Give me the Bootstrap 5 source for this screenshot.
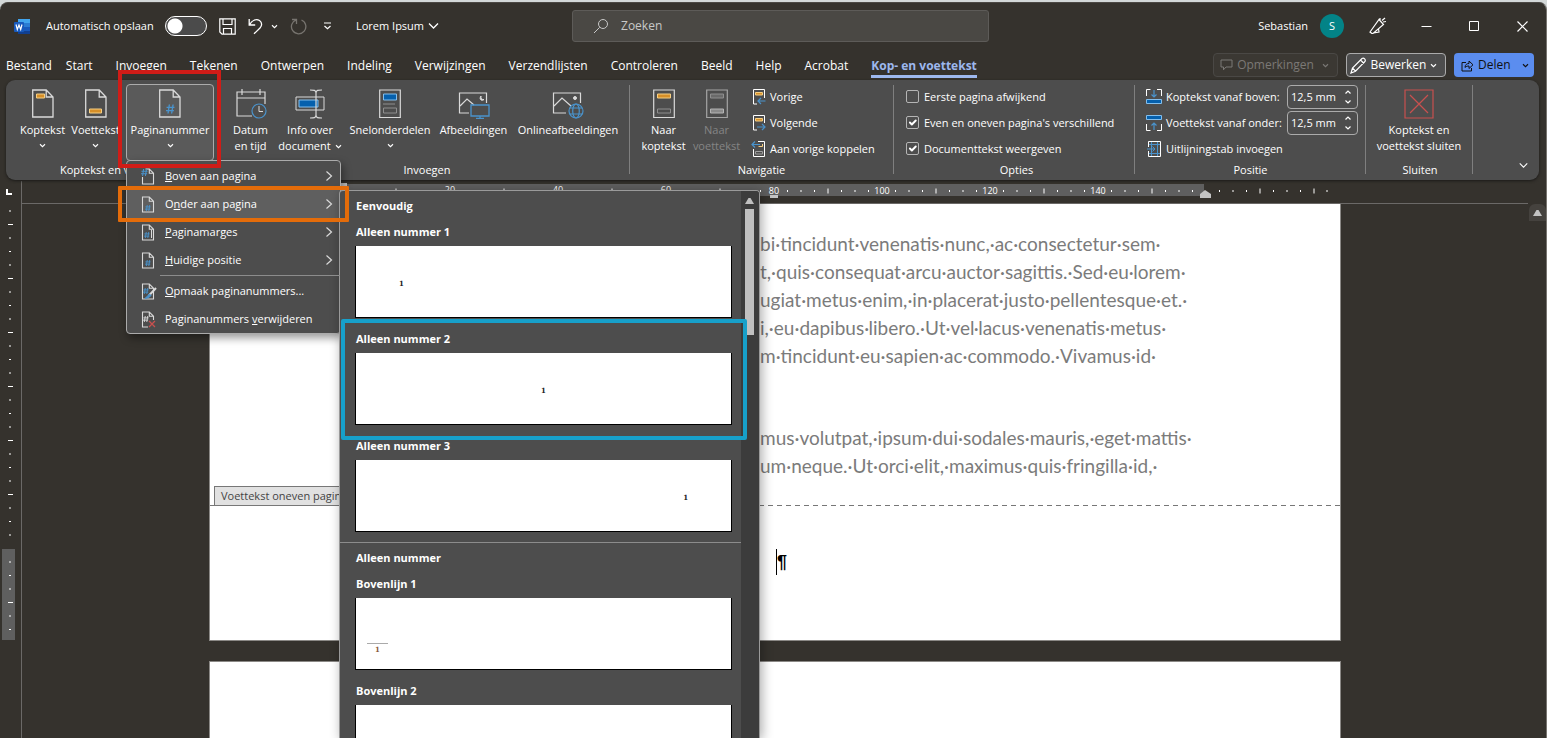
<!DOCTYPE html>
<html lang="nl">
<head>
<meta charset="utf-8">
<meta name="viewport" content="width=device-width, initial-scale=1">
<title>Lorem Ipsum - Word</title>
<link href="https://cdn.jsdelivr.net/npm/bootstrap@5.3.0/dist/css/bootstrap.min.css" rel="stylesheet">
<script src="https://cdn.jsdelivr.net/npm/bootstrap@5.3.0/dist/js/bootstrap.bundle.min.js" defer></script>
<style>
:root { --chrome:#35322d; --panel:#4d4d4d; --line:#ababab; --accent:#5b8def; --blue:#4a93cc; }
body { font-family:"Open Sans","Noto Sans",sans-serif; font-size:11px; line-height:16px; color:#fff; background:#d3d8d8; }
svg { display:block; flex:none; fill:none; stroke:currentColor; }
button { font-size:inherit; }
.plain { background:none; border:0; padding:0; color:inherit; line-height:inherit; }
.window { height:100vh; padding-top:2px; overflow:hidden; }
.window-inner { background:var(--chrome); border-radius:8px 8px 0 0; border-right:1px solid #77746f; border-top:1px solid #4b4844; }

.titlebar { display:grid; grid-template-columns:37% 27% 1fr; height:46px; }
.title-left { padding-left:14px; }
.autosave-label { width:119px; margin-left:15px; }
.autosave { width:42px; height:20px; margin:0; flex:none; background-color:#4b4b4b !important; border:1px solid #fff !important; border-radius:10px !important;
  background-image:radial-gradient(circle at 9px 9px,#fff 7px,transparent 8px) !important; background-size:auto; background-position:0 0; }
.gray-icon { color:#77746f; }
.search-box { background:#4a4844; border:1px solid #5d5b58; border-radius:3px; height:32px; padding-left:20px; gap:10px; color:#c8c8c8; }
.search-box input { background:none; border:0; outline:0; color:#d0d0d0; font-size:12px; }
.search-box input::placeholder { color:#c8c8c8; opacity:1; }
.avatar { width:24px; height:24px; background:#038387; margin-right:10px; }
.title-cell { width:48px; height:32px; display:flex; align-items:center; justify-content:center; }

.tabs-row { height:31px; font-size:12px; }
.tab-list { gap:23px; padding-left:6px; }
.tab-list a:first-child { margin-right:-9px; }
.tabs-row .nav-link { color:#fff; padding:8px 0 0; line-height:18px; height:29px; }
.tabs-row .nav-link.active { color:#9db8ee; font-weight:700; border-bottom:3px solid #9db8ee; }
.tab-tools { padding:4px 12px 0 0; gap:8px; }
.pill { height:24px; border-radius:4px; border:1px solid transparent; padding:0 8px 0 6px; font-size:12px; line-height:16px; }
.pill-off { color:#7b7976; border-color:#4a4845; background:#3b3833; width:125px; }
.pill-edit { color:#fff; border-color:var(--line); background:var(--panel); width:100px; padding-left:3px; }
.pill-share { color:#111; background:var(--accent); width:80px; padding-right:4px; }

.ribbon { background:var(--panel); margin:0 7px 0 6px; height:100px; border-radius:9px; z-index:10; box-shadow:0 1px 3px #1b1a18; }
.group { display:flex; flex-direction:column; flex:none; padding-top:4px; position:relative; }
.group.ruled::after { content:""; position:absolute; right:0; top:5px; bottom:6px; width:1px; background:#7f7f7f; }
.group-body { height:78px; display:flex; }
.group-label { text-align:center; height:16px; }
.big { height:77px; display:flex; flex-direction:column; align-items:center; padding:4px 0 0; color:#fff; background:none; border:1px solid transparent; border-radius:4px; line-height:16px; white-space:nowrap; }
.big > svg:first-child { margin-bottom:3px; color:#dadada; }
.big .chev { margin:5px 0 0; }
.big.pressed { background:#5a5a5a; border-color:var(--line); }
.big:disabled { color:#858585; }
.big.close-tools > svg { color:#c9504f; }
.w-s { width:53px; } .w-p { width:88px; } .w-i { width:66px; } .w-q { width:94px; } .w-a { width:73px; } .w-o { width:116px; } .w-c { width:104px; }
.stack { display:flex; flex-direction:column; }
.small-row { height:26px; display:flex; align-items:center; white-space:nowrap; }
.small-row .form-check-input { width:13px; height:13px; margin:0 5px 2px 0; background-color:transparent; border:1px solid #b5b5b5; border-radius:2px; float:none; flex:none; }
.small-row .form-check-input:checked { background-size:13px 13px; }
.spin { width:71px; height:24px; border:1px solid var(--line); border-radius:4px; padding:0 5px 0 3px; flex:none; }
.spin input { width:50px; background:none; border:0; padding:0; color:#fff; font-size:11px; outline:0; }
.g1 { width:213px; padding-left:10px; } .g2 { width:411px; padding-left:5px; } .g3 { width:264px; padding-left:7px; } .g4 { width:241px; padding-left:12px; } .g5 { width:231px; padding-left:11px; } .g6 { width:107px; padding-left:1px; }
.g1 .group-label { margin-left:44px; width:70px; text-align:left; overflow:hidden; white-space:nowrap; }
.g3 .group-label,.g4 .group-label { margin-left:-8px; } .g5 .group-label { margin-left:-11px; }
.collapse-button { margin:0 10px 12px 0; }

.marker { position:absolute; pointer-events:none; border:4px solid; z-index:30; }
.marker-red { border-color:#d01c17; inset:-14px -7px -6px -8px; }
.marker-orange { border-color:#e46c0a; inset:-4px -9px -4px -9px; border-radius:1px; }
.marker-blue { border-color:#17a0ca; inset:-8px -6px -6px 1px; border-radius:2px; }

.page-menu { top:76px; left:0; width:215px; min-width:0; padding:1px 0 0; margin:0; border:1px solid var(--line); border-radius:4px; background:var(--panel); color:#fff; font-size:11px; box-shadow:2px 4px 8px #0006; z-index:20; }
.page-menu > li { position:relative; }
.menu-row { height:28px; display:flex; align-items:center; padding:0 7px 0 14px; gap:10px; color:#fff; width:100%; border:0; background:none; text-align:left; line-height:16px; }
.menu-row svg { color:#dadada; }
.menu-row.hot { background:#5f5f5f; }
.menu-row span { flex:1; white-space:nowrap; }
.menu-line { margin:1px 0 1px 33px; border-top:1px solid #8c8c8c; height:0; }

.gallery { position:absolute; left:212px; top:0; width:421px; height:calc(100vh - 190px); overflow:hidden; border:1px solid #9a9a9a; border-bottom:0; border-radius:4px 4px 0 0; background:var(--panel); box-shadow:2px 2px 12px #0005; display:flex; font-weight:700; }
.gallery-list { flex:1; min-width:0; }
.gallery h6 { font-size:11px; line-height:29px; margin:0 0 0 16px; font-weight:700; }
.gallery-item { position:relative; height:107px; padding:0 9px 0 15px; }
.gallery-item label { display:block; height:26px; line-height:24px; padding-left:1px; }
.thumb { display:flex; align-items:center; width:100%; height:72px; padding:5px 43px 0; background:#fff; border:1px solid #000; border-top:0; color:#222; font:700 7px/8px "DejaVu Serif","Liberation Serif",serif; }
.thumb.top-rule { padding:30px 11px 0; color:#8a5a3a; }
.thumb.top-rule span { border-top:1px solid #aaa; width:21px; text-align:center; padding-top:2px; }
.gallery-sep { border-top:1px solid #8c8c8c; margin-top:1px; }
.gallery-scroll { width:18px; flex:none; background:#3c3c3c; padding-top:5px; }
.gallery-scroll i { display:block; width:9px; height:126px; background:#c0c0c0; margin:4px 0 0 4px; }

.work { flex:1; min-height:0; margin-top:1px; }
.side-ruler { width:22px; border-right:1px solid #6b6967; flex:none; }
.canvas { min-width:0; }
.ruler-row { height:23px; border-bottom:1px solid #6b6967; }
.sheet-col { width:1132px; margin:0 auto; }
.sheet { background:#fff; border:1px solid #8b8986; color:#7b7b7b; }
.sheet-first { height:437px; border-top:0; }
.sheet-next { height:90px; margin-top:20px; }
.body-text { font-family:Lato,"Liberation Sans",sans-serif; font-size:19px; line-height:28px; padding:26px 0 0 550px; height:301px; white-space:nowrap; overflow:hidden; }
.body-text p { margin:0 0 54px; }
.footer-line { background:repeating-linear-gradient(90deg,#777 0 5px,transparent 5px 9px); height:1px; }
.footer-tag { position:absolute; left:4px; bottom:0; height:20px; line-height:18px; padding:0 6px; border:1px solid #777; background:#e1e1e1; color:#444; }
.footer-text { color:#000; padding:43px 0 0 566px; font:700 18px/26px "Liberation Sans",sans-serif; }
.footer-text span { border-left:1px solid #000; display:inline-block; height:26px; }
.doc-scroll { width:18px; flex:none; }
.doc-scroll div { background:#45423e; border-radius:6px 6px 0 0; height:17px; margin:23px 0 0 1px; padding:5px 0 0 4px; }
</style>
</head>
<body>
<svg width="0" height="0" class="position-absolute" aria-hidden="true">
  <symbol id="down" viewBox="0 0 8 6"><path d="M1 1.500 4 4.500 7 1.500" stroke-width="1.300"/></symbol>
  <symbol id="right" viewBox="0 0 8 12"><path d="M1.500 1.500 6.500 6 1.500 10.500" stroke-width="1.200"/></symbol>
  <symbol id="sheet" viewBox="0 0 22 30"><path d="M.7 1h13.500L21 8v20H.7zM14.200 1v7H21" stroke-width="1.300"/></symbol>
  <symbol id="leaf" viewBox="0 0 14 17"><path d="M1.500 1h6.800L12.500 5.200v10.800h-11zM8.300 1v4.200h4.200" stroke-width="1.100"/></symbol>
  <symbol id="hash" viewBox="0 0 8 8"><path d="M3 0 1.800 8M6.300 0 5 8M.5 2.500h7M0 5.500h7" stroke-width="1.200"/></symbol>
</svg>
<div class="window">
<div class="window-inner d-flex flex-column h-100">

  <header class="titlebar">
    <div class="title-left d-flex align-items-center">
      <svg width="17" height="17" viewBox="0 0 17 17"><g stroke="none"><path fill="#41a5ee" d="M4 1h12v4H4z"/><path fill="#2b7cd3" d="M4 5h12v4H4z"/><path fill="#185abd" d="M4 9h12v4H4z"/><path fill="#103f91" d="M4 13h12v3H4z"/><rect y="4" width="10" height="10" rx="1" fill="#185abd"/></g><path d="m2 6.500 1.300 5L5 7l1.700 4.500L8 6.500" stroke="#fff" stroke-width="1.200"/></svg>
      <label class="autosave-label" for="autosave">Automatisch opslaan</label>
      <input class="form-check-input autosave" type="checkbox" role="switch" id="autosave">
      <button class="plain ms-2 ps-1" aria-label="Opslaan"><svg width="17" height="17" viewBox="0 0 17 17"><path stroke-width="1.200" d="M.8.800h15.400v15.400H3L.8 14zM4 1v5.500h9V1M4.500 16v-5.500h8V16"/></svg></button>
      <button class="plain ms-2 ps-1 d-flex align-items-center gap-2" aria-label="Ongedaan maken"><svg width="15" height="17" viewBox="0 0 15 17"><path stroke-width="1.300" d="M1.200 1v6h6M1.500 6.800C4 2.500 8 .5 11.500 2.500c3 2 2.500 5.500.5 7.500L6 15.800"/></svg><svg width="7" height="5"><use href="#down"/></svg></button>
      <button class="plain gray-icon ms-2 ps-1" aria-label="Herhalen" disabled><svg width="17" height="17" viewBox="0 0 17 17"><path stroke-width="1.300" d="M2 1.500h4.500V6M6.300 1.800A7.200 7.200 0 1 0 11.500 2"/></svg></button>
      <button class="plain ms-3" aria-label="Werkbalk aanpassen"><svg width="9" height="8" viewBox="0 0 9 8"><path stroke-width="1.200" d="M1 1h7M1.500 4 4.500 6.800 7.500 4"/></svg></button>
      <button class="plain ms-4 d-flex align-items-center gap-1">Lorem Ipsum <svg width="11" height="8" viewBox="0 0 11 8"><path stroke-width="1.300" d="m1 1.500 4.500 4.500L10 1.500"/></svg></button>
    </div>
    <div class="d-flex align-items-center">
      <div class="search-box d-flex align-items-center w-100">
        <svg width="16" height="16" viewBox="0 0 16 16"><circle cx="10" cy="6" r="4.500"/><path d="M6.700 9.300 1 15"/></svg>
        <input type="search" placeholder="Zoeken" aria-label="Zoeken" class="flex-fill">
      </div>
    </div>
    <div class="d-flex align-items-center justify-content-end">
      <span class="me-2 pe-1">Sebastian</span>
      <span class="avatar rounded-circle d-flex align-items-center justify-content-center">S</span>
      <button class="plain title-cell" aria-label="Nieuw"><svg width="22" height="18" viewBox="0 0 22 18"><path stroke-width="1.200" d="M5 16.500 3 15 12 2.500l4.500 5L6 16.500zM6.500 16 12 15l-.5-3M13 1V3M16 5l3-.5M15 3.500 18 1"/></svg></button>
      <button class="plain title-cell" aria-label="Minimaliseren"><svg width="11" height="11" viewBox="0 0 11 11"><path d="M.5 5.500h10"/></svg></button>
      <button class="plain title-cell" aria-label="Maximaliseren"><svg width="10" height="10" viewBox="0 0 10 10"><path d="M.5.500h9v9h-9z"/></svg></button>
      <button class="plain title-cell" aria-label="Sluiten"><svg width="11" height="11" viewBox="0 0 11 11"><path stroke-width="1.200" d="m.5.500 10 10m0-10-10 10"/></svg></button>
    </div>
  </header>

  <div class="tabs-row d-flex justify-content-between">
    <nav class="nav flex-nowrap text-nowrap tab-list">
      <a class="nav-link" href="#">Bestand</a><a class="nav-link" href="#">Start</a><a class="nav-link" href="#">Invoegen</a><a class="nav-link" href="#">Tekenen</a><a class="nav-link" href="#">Ontwerpen</a><a class="nav-link" href="#">Indeling</a><a class="nav-link" href="#">Verwijzingen</a><a class="nav-link" href="#">Verzendlijsten</a><a class="nav-link" href="#">Controleren</a><a class="nav-link" href="#">Beeld</a><a class="nav-link" href="#">Help</a><a class="nav-link" href="#">Acrobat</a><a class="nav-link active" href="#">Kop- en voettekst</a>
    </nav>
    <div class="tab-tools d-flex">
      <button class="pill pill-off d-flex align-items-center justify-content-between" disabled><svg width="13" height="12" viewBox="0 0 13 12"><path d="M1 1h11v7H6l-2.500 2.800V8H1z"/></svg>Opmerkingen<svg class="ms-1" width="7" height="5"><use href="#down"/></svg></button>
      <button class="pill pill-edit d-flex align-items-center justify-content-between"><svg width="17" height="17" viewBox="0 0 17 17"><path stroke-width="1.200" d="m1 16 1.500-5L12 1.500c2-1 4 1 3 3L5.500 14.200zM10.500 3 14 6.500M2.500 11l3 3.200"/></svg>Bewerken<svg width="7" height="5"><use href="#down"/></svg></button>
      <button class="pill pill-share d-flex align-items-center gap-1"><svg width="13" height="13" viewBox="0 0 13 13"><path d="M5 3.500H1v8.500h9.500V9M4 8.500c0-3 2-4 4-4V2l4 3.800-4 3.700V7C6.500 7 5 7.300 4 8.500z"/></svg>Delen<svg class="ms-auto" width="7" height="5"><use href="#down"/></svg></button>
    </div>
  </div>

  <section class="ribbon d-flex position-relative" aria-label="Lint">
    <div class="group g1">
      <div class="group-body">
        <button class="big w-s"><svg width="22" height="30"><use href="#sheet"/><path d="M4.500 5h8v4h-8z" fill="#d68f28" stroke="#f6cf83"/></svg>Koptekst<svg class="chev" width="7" height="5"><use href="#down"/></svg></button>
        <button class="big w-s"><svg width="22" height="30"><use href="#sheet"/><path d="M4.500 20h12v4h-12z" fill="#d68f28" stroke="#f6cf83"/></svg>Voettekst<svg class="chev" width="7" height="5"><use href="#down"/></svg></button>
        <div class="position-relative ms-1">
          <button class="big pressed w-p" aria-expanded="true"><svg width="22" height="30"><use href="#sheet"/><g color="#4a93cc" stroke="#4a93cc"><use href="#hash" x="7" y="15" width="9" height="10"/></g></svg>Paginanummer<svg class="chev" width="7" height="5"><use href="#down"/></svg></button>
          <ul class="dropdown-menu show page-menu">
            <li><button class="menu-row"><svg width="14" height="17"><path d="M4.500 1h3.800L12.500 5.200v10.800h-11V9M8.300 1v4.200h4.200" stroke-width="1.100"/><g stroke="#4a93cc"><use href="#hash" x="0" y="1" width="7" height="7"/></g></svg><span><u>B</u>oven aan pagina</span><svg width="8" height="12"><use href="#right"/></svg></button></li>
            <li>
              <button class="menu-row hot"><svg width="14" height="17"><use href="#leaf"/><g stroke="#4a93cc"><use href="#hash" x="4" y="9" width="6" height="6"/></g></svg><span>O<u>n</u>der aan pagina</span><svg width="8" height="12"><use href="#right"/></svg></button>
              <div class="gallery">
                <div class="gallery-list">
                  <h6>Eenvoudig</h6>
                  <div class="gallery-item"><label for="n1">Alleen nummer 1</label><button id="n1" class="thumb justify-content-start">1</button></div>
                  <div class="gallery-item"><label for="n2">Alleen nummer 2</label><button id="n2" class="thumb justify-content-center">1</button><div class="marker marker-blue"></div></div>
                  <div class="gallery-item"><label for="n3">Alleen nummer 3</label><button id="n3" class="thumb justify-content-end">1</button></div>
                  <div class="gallery-sep"></div>
                  <h6>Alleen nummer</h6>
                  <div class="gallery-item"><label for="b1">Bovenlijn 1</label><button id="b1" class="thumb top-rule"><span>1</span></button></div>
                  <div class="gallery-item"><label for="b2">Bovenlijn 2</label><button id="b2" class="thumb" aria-label="Bovenlijn 2"></button></div>
                </div>
                <div class="gallery-scroll"><svg class="ms-1" width="9" height="9" viewBox="0 0 9 9"><path d="M0 8 3.500 2h2L9 8z" fill="#c0c0c0" stroke="none"/></svg><i></i></div>
              </div>
              <div class="marker marker-orange"></div>
            </li>
            <li><button class="menu-row"><svg width="14" height="17"><use href="#leaf"/><g stroke="#4a93cc"><use href="#hash" x="3" y="8" width="6" height="6"/></g><path d="M10.500 6v8"/></svg><span><u>P</u>aginamarges</span><svg width="8" height="12"><use href="#right"/></svg></button></li>
            <li><button class="menu-row"><svg width="14" height="17"><use href="#leaf"/><g stroke="#4a93cc"><use href="#hash" x="4" y="8" width="6" height="6"/></g></svg><span><u>H</u>uidige positie</span><svg width="8" height="12"><use href="#right"/></svg></button></li>
            <li class="menu-line" role="separator"></li>
            <li><button class="menu-row"><svg width="14" height="17" overflow="visible"><use href="#leaf"/><g stroke="#4a93cc"><use href="#hash" x="2" y="5" width="6" height="6"/></g><path d="m15 5-7 7.500" stroke-width="2"/><path d="M8.500 11 4 15.500l4-1 2-2z" fill="#4a93cc" stroke="#4a93cc"/></svg><span><u>O</u>pmaak paginanummers...</span></button></li>
            <li><button class="menu-row"><svg width="14" height="17" overflow="visible"><use href="#leaf"/><use href="#hash" x="2" y="5" width="6" height="6"/><path d="M7 9h8v8H7z" fill="#4d4d4d" stroke="none"/><path d="m8 10 6 6m0-6-6 6" stroke="#c9504f" stroke-width="1.300"/></svg><span>Paginanummers <u>v</u>erwijderen</span></button></li>
          </ul>
          <div class="marker marker-red"></div>
        </div>
      </div>
      <div class="group-label">Koptekst en voettekst</div>
    </div>

    <div class="group g2 ruled">
      <div class="group-body">
        <button class="big w-s"><svg width="32" height="30" viewBox="0 0 32 30"><path stroke-width="1.200" d="M17 27H2V3h28v12M2 9h28M7 0v6M25 0v6"/><circle cx="24" cy="22" r="7" stroke="#4a93cc" stroke-width="1.200"/><path d="M24 17v5.500h4"/></svg>Datum<br>en tijd</button>
        <button class="big w-i"><svg width="30" height="30" viewBox="0 0 30 30"><path d="M1 8h28v13H1z"/><path d="M4 11h19v7H4z" fill="#0560ad" stroke="#83beec"/><path d="M15 1c4 0 6 0 6 3v22c0 3-2 3-6 3M27 1c-4 0-6 0-6 3v22c0 3 2 3 6 3" stroke-width="1.200"/></svg><span>Info over</span><span class="d-flex align-items-center gap-1">document <svg width="7" height="5"><use href="#down"/></svg></span></button>
        <button class="big w-q"><svg width="22" height="30" viewBox="0 0 22 30"><path d="M.7 1h20.600v27.500H.7z" stroke-width="1.200"/><path d="M4.500 5h13v6h-13z" fill="#0560ad" stroke="#83beec"/><path d="M4 15h12M4.500 19h13v5h-13z" stroke="#8f8f8f"/></svg>Snelonderdelen<svg class="chev" width="7" height="5"><use href="#down"/></svg></button>
        <button class="big w-a"><svg width="32" height="30" viewBox="0 0 32 30"><path d="M11 24H1.500V4h27v10M2 17l7-7 7 6" stroke-width="1.200"/><path d="M23 7c-.5 2 1 4 3 3.500-2 2-5.500 0-3-3.500z" fill="currentColor"/><path d="M13 16h18v11H13zM22 27v3M18 29.500h8" stroke="#4a93cc" stroke-width="1.300"/></svg>Afbeeldingen</button>
        <button class="big w-o"><svg width="32" height="30" viewBox="0 0 32 30"><path d="M14 24H1.500V4h27v10M2 17l8-8 9 8" stroke-width="1.200"/><circle cx="23" cy="9" r="1.500" fill="currentColor"/><g stroke="#4a93cc" stroke-width="1.200"><circle cx="24" cy="22" r="7"/><ellipse cx="24" cy="22" rx="3.300" ry="7"/><path d="M17.800 19h12.400M17.800 25h12.400"/></g></svg>Onlineafbeeldingen</button>
      </div>
      <div class="group-label">Invoegen</div>
    </div>

    <div class="group g3 ruled">
      <div class="group-body">
        <button class="big w-s"><svg width="22" height="30" viewBox="0 0 22 30"><path d="M.7 1h20.600v27.500H.7z" stroke-width="1.200"/><path d="M4.500 5h13v4h-13z" fill="#d68f28" stroke="#f6cf83"/><path d="M4.500 20h13v4h-13z" stroke="#8f8f8f"/></svg>Naar<br>koptekst</button>
        <button class="big w-s" disabled><svg width="22" height="30" viewBox="0 0 22 30"><path d="M.7 1h20.600v27.500H.7z" stroke="#a5a5a5" stroke-width="1.200"/><path d="M4.500 5h13v4h-13z" fill="#6a6a6a" stroke="#8f8f8f"/><path d="M4.500 20h13v4h-13z" fill="#8a8a8a" stroke="#b5b5b5"/></svg>Naar<br>voettekst</button>
        <div class="stack ms-2">
          <button class="plain small-row gap-1"><svg width="15" height="16" viewBox="0 0 15 16"><path d="M6 15H2.500V.500h11V9"/><path d="M4.500 3.500h7V6h-7z" fill="#d68f28" stroke="#f6cf83"/><path d="M14.500 12H7M10 9l-3 3 3 3" stroke="#4a93cc" stroke-width="1.200"/></svg>Vorige</button>
          <button class="plain small-row gap-1"><svg width="15" height="16" viewBox="0 0 15 16"><path d="M6 15H2.500V.500h11V8"/><path d="M4.500 3.500h7V6h-7z" fill="#d68f28" stroke="#f6cf83"/><path d="M6 12h8M11 9l3 3-3 3" stroke="#4a93cc" stroke-width="1.200"/></svg>Volgende</button>
          <button class="plain small-row gap-1"><svg width="15" height="16" viewBox="0 0 15 16"><path d="M7 .5h6.500v15h-11V8"/><path d="M7.500 5.500h4V3" stroke="#f6cf83"/><path d="M4.500 10.500h7V13h-7z" stroke="#9f9f9f"/><path d="M9 3.500H1M4 .5 1 3.500l3 3" stroke="#4a93cc" stroke-width="1.200"/></svg>Aan vorige koppelen</button>
        </div>
      </div>
      <div class="group-label">Navigatie</div>
    </div>

    <div class="group g4 ruled">
      <div class="stack group-body flex-column">
        <div class="small-row"><input class="form-check-input" type="checkbox" id="c1"><label for="c1">Eerste pagina afwijkend</label></div>
        <div class="small-row"><input class="form-check-input" type="checkbox" id="c2" checked><label for="c2">Even en oneven pagina's verschillend</label></div>
        <div class="small-row"><input class="form-check-input" type="checkbox" id="c3" checked><label for="c3">Documenttekst weergeven</label></div>
      </div>
      <div class="group-label">Opties</div>
    </div>

    <div class="group g5 ruled">
      <div class="stack group-body flex-column pe-2">
        <div class="small-row"><svg class="me-1" width="16" height="16" viewBox="0 0 16 16"><path d="M.5 7V.500h4M11 .5h4.500V7"/><path d="M8 1v7M5.500 5.500 8 8l2.500-2.500" stroke="#4a93cc" stroke-width="1.200"/><path d="M.5 10.500h15v4H.500z" fill="#0560ad" stroke="#83beec"/></svg><label for="top">Koptekst vanaf boven:</label>
          <span class="spin d-flex align-items-center justify-content-between ms-auto"><input type="text" id="top" value="12,5 mm"><svg width="8" height="16" viewBox="0 0 8 16"><path stroke-width="1.200" d="m1.500 4.500 2.500-2.500 2.500 2.500M1.500 11.500 4 14l2.500-2.500"/></svg></span></div>
        <div class="small-row"><svg class="me-1" width="16" height="16" viewBox="0 0 16 16"><path d="M.5 9v6.500h4M11 15.500h4.500V9"/><path d="M8 15V8M5.500 10.500 8 8l2.500 2.500" stroke="#4a93cc" stroke-width="1.200"/><path d="M.5.500h15v4H.500z" fill="#0560ad" stroke="#83beec"/></svg><label for="bot">Voettekst vanaf onder:</label>
          <span class="spin d-flex align-items-center justify-content-between ms-auto"><input type="text" id="bot" value="12,5 mm"><svg width="8" height="16" viewBox="0 0 8 16"><path stroke-width="1.200" d="m1.500 4.500 2.500-2.500 2.500 2.500M1.500 11.500 4 14l2.500-2.500"/></svg></span></div>
        <button class="plain small-row gap-1"><svg width="16" height="16" viewBox="0 0 16 16"><path d="M2.500 6V.500h12v15h-12V10"/><path d="M5.500 1v14M11.500 1v14M3 3.500h11M3 12.500h11M1 8h8M6.500 5.500 9 8l-2.500 2.500" stroke="#4a93cc"/></svg>Uitlijningstab invoegen</button>
      </div>
      <div class="group-label">Positie</div>
    </div>

    <div class="group g6 ruled">
      <div class="group-body">
        <button class="big close-tools w-c"><svg width="30" height="30" viewBox="0 0 30 30"><path d="M1 1h28v28H1zM6 6l18 18M24 6 6 24" stroke-width="1.200"/></svg>Koptekst en<br>voettekst sluiten</button>
      </div>
      <div class="group-label">Sluiten</div>
    </div>
    <button class="plain collapse-button ms-auto align-self-end" aria-label="Lint samenvouwen"><svg width="11" height="5" viewBox="0 0 11 6"><path stroke-width="1.300" d="m1 .5 4.500 4.500L10 .5"/></svg></button>
  </section>

  <div class="work d-flex">
    <div class="side-ruler">
      <svg width="21" height="560" viewBox="0 181 21 560">
        <defs><pattern id="vt" x="0" y="217" width="21" height="54" patternUnits="userSpaceOnUse"><path d="M8 7.500h5M9 21h2M9 34.500h2M9 48h2" stroke="#fff"/></pattern></defs>
        <path d="M7 189v5h5" stroke="#fff" stroke-width="2"/>
        <path d="M2 549h13v91H2z" fill="#5f5f5f" stroke="none"/>
        <path d="M0 206h21v334H0zM0 555h21v80H0z" fill="url(#vt)" stroke="none"/>
      </svg>
    </div>
    <div class="canvas flex-fill">
      <div class="ruler-row"><div class="sheet-col">
        <svg width="1132" height="20" viewBox="0 181 1132 20">
          <defs><pattern id="ht" x="133" y="181" width="108" height="20" patternUnits="userSpaceOnUse"><path d="M13.500 9v2M27 9v2M40.500 9v2M54 7.500v5M67.500 9v2M81 9v2M94.500 9v2" stroke="#fff"/></pattern></defs>
          <path d="M0 184h995v12H0z" fill="#5f5f5f" stroke="none"/>
          <path d="M136 181h973v20H136z" fill="url(#ht)" stroke="none"/>
          <path d="M1105 188.500v5M1118 190v2" stroke="#fff"/>
          <g fill="#fff" stroke="none" font-size="9" text-anchor="middle"><text x="241" y="193">20</text><text x="349" y="193">40</text><text x="457" y="193">60</text><text x="565" y="194">80</text><text x="673" y="194">100</text><text x="781" y="194">120</text><text x="889" y="194">140</text></g>
          <path d="M128 183h10v5l-5 4-5-4zM561 195h8v3h-8zM991 198v-4l5-4 6 4v4z" fill="#c3c3c3" stroke="none"/>
        </svg>
      </div></div>
      <main class="sheet-col">
        <article class="sheet sheet-first">
          <div class="body-text">
            <p>bi·tincidunt·venenatis·nunc,·ac·consectetur·sem·<br>t,·quis·consequat·arcu·auctor·sagittis.·Sed·eu·lorem·<br>ugiat·metus·enim,·in·placerat·justo·pellentesque·et.·<br>i,·eu·dapibus·libero.·Ut·vel·lacus·venenatis·metus·<br>m·tincidunt·eu·sapien·ac·commodo.·Vivamus·id·</p>
            <p>mus·volutpat,·ipsum·dui·sodales·mauris,·eget·mattis·<br>um·neque.·Ut·orci·elit,·maximus·quis·fringilla·id,·</p>
          </div>
          <div class="footer-line position-relative"><span class="footer-tag">Voettekst oneven pagina</span></div>
          <div class="footer-text"><span>¶</span></div>
        </article>
        <article class="sheet sheet-next" aria-label="Pagina 2"></article>
      </main>
    </div>
    <div class="doc-scroll"><div><svg width="9" height="8" viewBox="0 0 9 8"><path d="M0 7 3.500 1h2L9 7z" fill="#c3c3c3" stroke="none"/></svg></div></div>
  </div>
</div>
</div>
</body>
</html>
